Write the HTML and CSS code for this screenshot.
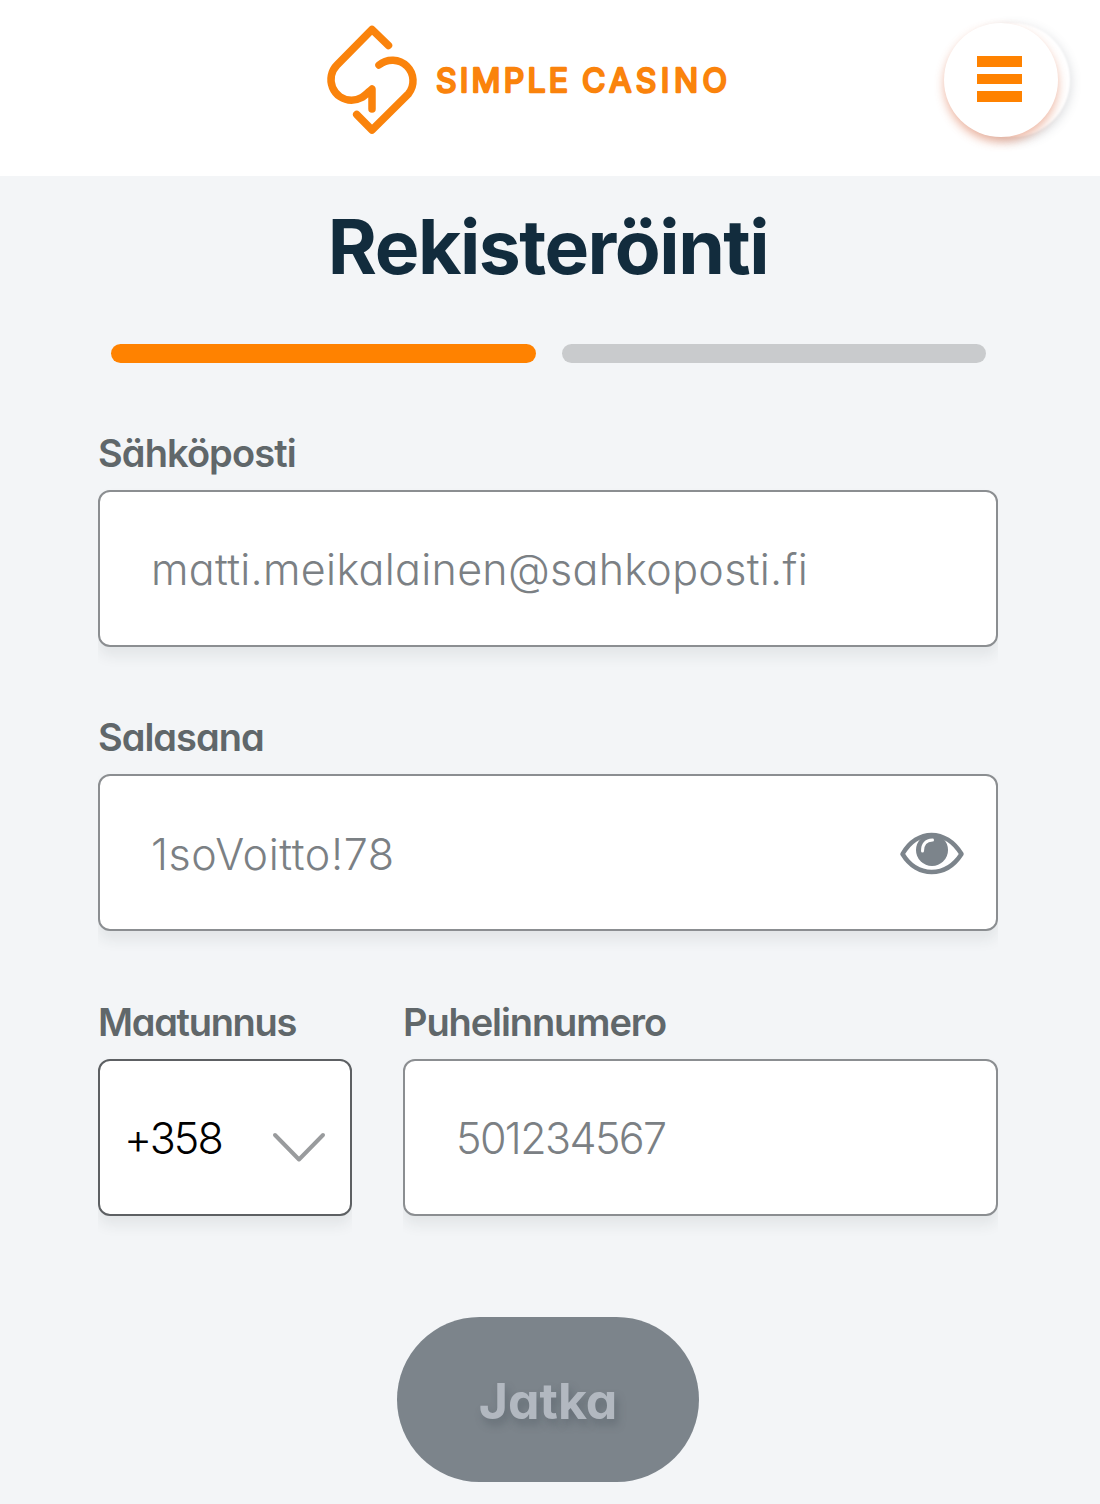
FILE: index.html
```html
<!DOCTYPE html>
<html lang="fi">
<head>
<meta charset="utf-8">
<title>Rekisteröinti</title>
<link rel="stylesheet" href="styles.css">
</head>
<body>
<header class="header">
  <svg class="logo" width="410" height="120" viewBox="0 0 410 120" role="img" aria-label="Simple Casino">
    <g class="logo-mark">
      <path d="M66.500 25.500 L50 9.500 L15 45 A20.700 20.700 0 0 0 29.500 80.300 C39 80.300 43 75 50 69 V89"/>
      <path d="M57 45 A20.700 20.700 0 0 1 86.300 74 L50 110 L34.700 94.500"/>
    </g>
    <text class="logo-text" x="114" y="71.5" textLength="132">SIMPLE</text>
    <text class="logo-text" x="260" y="71.5" textLength="145">CASINO</text>
  </svg>
  <button class="menu" aria-label="Valikko"><span class="bar"></span><span class="bar"></span><span class="bar"></span></button>
</header>
<main class="page">
  <h1 class="title">Rekisteröinti</h1>
  <div class="steps"><span class="step active"></span><span class="step"></span></div>
  <form class="form">
    <div class="group">
      <div class="label label-email">Sähköposti</div>
      <div class="field"><span class="value email">matti.meikalainen@sahkoposti.fi</span></div>
    </div>
    <div class="group">
      <div class="label label-pass">Salasana</div>
      <div class="field"><span class="value pass">1soVoitto!78</span>
        <svg class="eye" width="66" height="44" viewBox="0 0 66 44">
          <path class="eye-line" d="M3.500 22 C18 -3.500 47 -3.500 62.500 22 C47 46 18 46 3.500 22Z"/>
          <circle class="eye-ball" cx="33" cy="18" r="16"/>
          <path class="eye-glint" d="M23.500 19 Q23.500 8.500 33.500 8"/>
        </svg>
      </div>
    </div>
    <div class="row">
      <div class="group">
        <div class="label label-code">Maatunnus</div>
        <div class="field select"><span class="value code">+358</span>
          <svg class="chevron" width="54" height="32" viewBox="0 0 54 32"><path d="M3 3 L27 27.500 L51 3"/></svg>
        </div>
      </div>
      <div class="group">
        <div class="label label-phone">Puhelinnumero</div>
        <div class="field"><span class="value phone">501234567</span></div>
      </div>
    </div>
    <button class="submit" type="button">Jatka</button>
  </form>
</main>
</body>
</html>
```
FILE: styles.css
```css
* { box-sizing: border-box; }
body {
  margin: 0;
  background: #f3f5f7;
  font-family: Inter, "Liberation Sans", sans-serif;
  font-feature-settings: "cv11";
}
.header {
  height: 175.5px;
  background: #fff;
  display: grid;
  grid-template-columns: 322px 1fr 114px;
  padding: 20px 42px 0 0;
  align-items: start;
}
.logo { grid-column: 2; }
.logo-mark { fill: none; stroke: #fa830c; stroke-width: 7.5; stroke-linecap: round; stroke-linejoin: round; }
.logo-text { font-size: 32px; font-weight: 400; fill: #fa830c; stroke: #fa830c; stroke-width: 2.4; stroke-linejoin: round; }
.menu {
  width: 114px;
  height: 114px;
  margin: 3px 0 0;
  padding: 0 3px 2px 0;
  border: 0;
  border-radius: 50%;
  background: #fff;
  display: flex;
  flex-direction: column;
  align-items: center;
  justify-content: center;
  gap: 7px;
  box-shadow: 0 5px 10px rgba(215, 90, 45, .42), 12px 0 2px #fff, 13px 3px 11px rgba(70, 80, 95, .2);
}
.bar { width: 45px; height: 10.5px; background: #ff8200; }
.page { padding: 0 102px 0 98px; }
.title {
  margin: 26px 0 0;
  height: 90px;
  font-size: 75px;
  line-height: 90px;
  font-weight: 700;
  letter-spacing: -1.5px;
  text-align: center;
  color: #122c3d;
}
.steps { display: grid; grid-template-columns: 1fr 1fr; gap: 26px; padding: 0 12px 0 13px; margin-top: 52px; }
.step { height: 19px; border-radius: 10px; background: #c9cbcd; }
.step.active { background: #ff8200; }
.form { margin-top: 65px; display: flex; flex-direction: column; gap: 65.6px; }
.label { height: 50px; margin-bottom: 12px; line-height: 50px; font-size: 38px; font-weight: 600; color: #60676a; white-space: nowrap; }
.field {
  height: 157px;
  border: 2px solid #8b8e91;
  border-radius: 12px;
  background: #fff;
  display: flex;
  align-items: center;
  justify-content: space-between;
  padding: 2px 31px 0 51px;
  box-shadow: 0 9px 14px rgba(40, 50, 50, .08);
  clip-path: inset(-10px 0 -22px 0);
}
.value { font-size: 43px; font-weight: 300; color: #7b8084; white-space: nowrap; }
.select { border-color: #5d6063; padding: 2px 24px 0 24px; }
.code { color: #000; }
.row { display: grid; grid-template-columns: 254px 1fr; gap: 51px; }
.eye-line { fill: none; stroke: #7c848b; stroke-width: 4.5; stroke-linejoin: round; }
.eye-ball { fill: #7c848b; }
.eye-glint { fill: none; stroke: #fff; stroke-width: 3; stroke-linecap: round; }
.chevron { margin-top: 20px; fill: none; stroke: #999b9d; stroke-width: 4; stroke-linecap: round; stroke-linejoin: round; }
.submit {
  align-self: center;
  width: 302px;
  height: 165px;
  margin-top: 36px;
  padding: 2px 0 0;
  border: 0;
  border-radius: 83px;
  background: #7c848b;
  color: #b2b8c0;
  font: inherit;
  font-feature-settings: inherit;
  font-size: 50px;
  font-weight: 700;
  text-shadow: 3px 6px 8px rgba(70, 80, 90, .4);
}
.label-email { letter-spacing: -.9px; }
.label-pass { letter-spacing: -1px; }
.label-code { letter-spacing: -1.3px; }
.label-phone { letter-spacing: -1.1px; }
.email { letter-spacing: .3px; }
.pass { letter-spacing: .6px; }
.code { letter-spacing: -1.9px; }
.phone { letter-spacing: -1.6px; }
```
